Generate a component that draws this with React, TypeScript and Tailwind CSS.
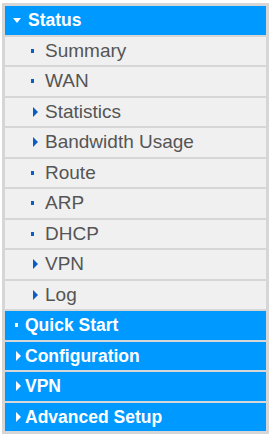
import React from 'react';

type Item = { label: string; kind: 'dot' | 'arrow' };

const subItems: Item[] = [
  { label: 'Summary', kind: 'dot' },
  { label: 'WAN', kind: 'dot' },
  { label: 'Statistics', kind: 'arrow' },
  { label: 'Bandwidth Usage', kind: 'arrow' },
  { label: 'Route', kind: 'dot' },
  { label: 'ARP', kind: 'dot' },
  { label: 'DHCP', kind: 'dot' },
  { label: 'VPN', kind: 'arrow' },
  { label: 'Log', kind: 'arrow' },
];

const topItems: Item[] = [
  { label: 'Quick Start', kind: 'dot' },
  { label: 'Configuration', kind: 'arrow' },
  { label: 'VPN', kind: 'arrow' },
  { label: 'Advanced Setup', kind: 'arrow' },
];

const Marker = ({ kind, light }: { kind: 'dot' | 'arrow'; light?: boolean }) => {
  const color = light ? 'border-l-white' : 'border-l-[#0a5fc4]';
  if (kind === 'dot') {
    return <span className={`block h-[4px] w-[3px] ${light ? 'bg-white' : 'bg-[#0a5fc4]'}`} />;
  }
  return (
    <span
      className={`block h-0 w-0 border-y-[5px] border-l-[5px] border-y-transparent ${color}`}
    />
  );
};

export default function App() {
  return (
    <div className="bg-white px-[2px] pt-[3px] font-['Liberation_Sans',Arial,sans-serif]">
      <div className="flex w-[267px] flex-col gap-[2px] bg-[#d6d6d6] p-[3px]">
        <div className="flex h-[28.5px] items-center bg-[#0099ff] text-[17.5px] font-bold text-white">
          <span className="ml-[8px] mr-[7px] block h-0 w-0 border-x-[4px] border-t-[5px] border-x-transparent border-t-white" />
          Status
        </div>
        {subItems.map((item) => (
          <div
            key={item.label}
            className="flex h-[28.5px] items-center bg-[#f0f0f0] text-[19px] text-[#555555]"
          >
            <div className={`flex w-[40px] justify-end ${item.kind === 'dot' ? 'pr-[11px]' : 'pr-[7px]'}`}>
              <Marker kind={item.kind} />
            </div>
            {item.label}
          </div>
        ))}
        {topItems.map((item) => (
          <div
            key={item.label}
            className="flex h-[28.5px] items-center bg-[#0099ff] text-[17.5px] font-bold text-white"
          >
            <div className={`flex w-[20px] ${item.kind === 'dot' ? 'pl-[10px]' : 'pl-[11px]'}`}>
              <Marker kind={item.kind} light />
            </div>
            {item.label}
          </div>
        ))}
      </div>
    </div>
  );
}
